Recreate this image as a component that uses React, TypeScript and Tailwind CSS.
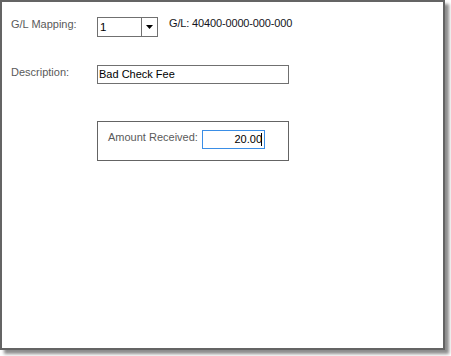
import React from "react";

export default function App() {
  return (
    <div className="w-[451px] h-[356px] bg-white font-['Liberation_Sans',Arial,sans-serif] text-[11px] leading-[13px]">
      <div className="w-[445px] h-[350px] border-2 border-[#646464] bg-white shadow-[4px_4px_3px_rgba(0,0,0,0.45)] pl-[9px] pt-[15px] flex flex-col">
        {/* Row 1 */}
        <div className="flex items-start h-[20px]">
          <div className="w-[86px] mt-[1px] text-[#5a5a5a]">G/L Mapping:</div>
          <div className="w-[61px] h-[20px] border border-[#707070] flex bg-white">
            <div className="flex-1 pl-[2px] pt-[3px] text-black text-[11.5px]">1</div>
            <div className="w-[16px] border-l border-[#707070] flex items-center justify-center">
              <svg width="7" height="4" viewBox="0 0 7 4">
                <path d="M0 0 H7 L3.5 4 Z" fill="#000" />
              </svg>
            </div>
          </div>
          <div className="ml-[11px] text-[#141420] tracking-[-0.15px]">G/L: 40400-0000-000-000</div>
        </div>

        {/* Row 2 */}
        <div className="flex items-start mt-[28px]">
          <div className="w-[86px] mt-[1px] text-[#5a5a5a]">Description:</div>
          <div className="w-[192px] h-[19px] border border-[#707070] pl-[1px] pt-[2px] text-black">Bad Check Fee</div>
        </div>

        {/* Row 3 group box */}
        <div className="ml-[86px] mt-[37px] w-[192px] h-[40px] border border-[#646464] pl-[10px] pt-[8px] flex items-start">
          <div className="w-[94px] mt-[1px] text-[#5a5a5a]">Amount Received:</div>
          <div className="w-[63px] h-[19px] border border-[#3a8ee6] flex items-center justify-end pr-[2px] text-black">
            <span>20.00</span>
            <span className="w-[1px] h-[13px] bg-black -ml-[1px]" />
          </div>
        </div>
      </div>
    </div>
  );
}
